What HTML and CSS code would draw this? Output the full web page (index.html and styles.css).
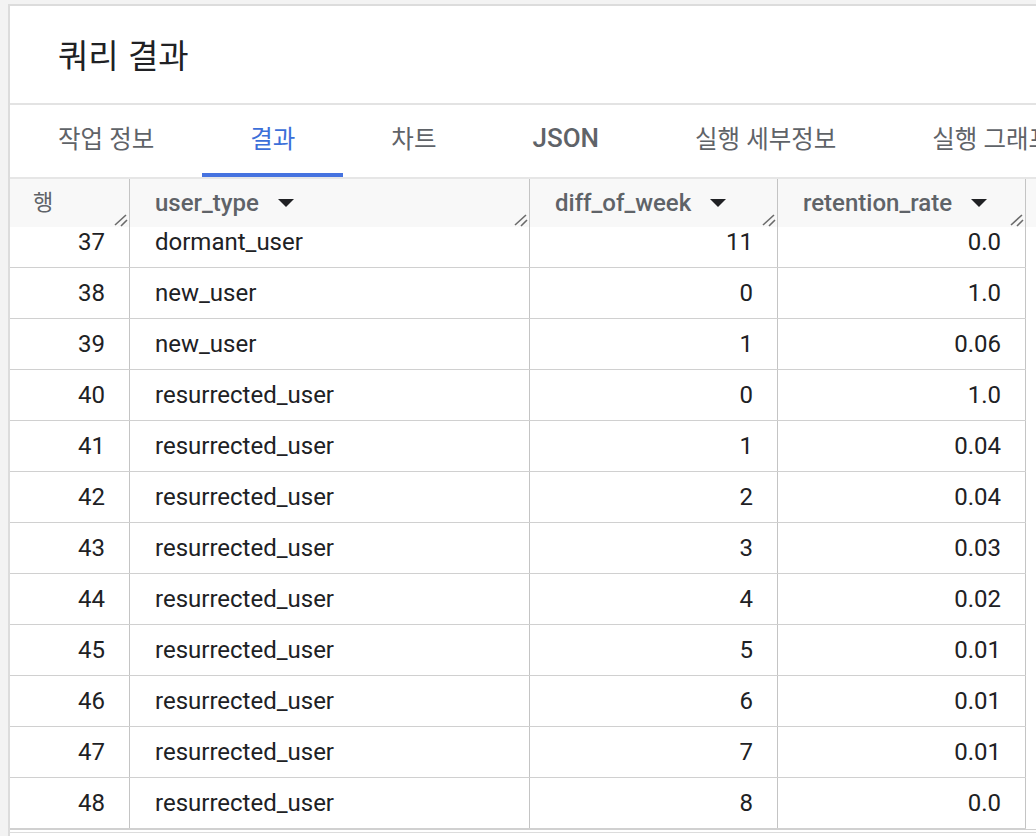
FILE: index.html
```html
<!DOCTYPE html>
<html lang="ko">
<head>
<meta charset="utf-8">
<title>쿼리 결과</title>
<link rel="stylesheet" href="styles.css">
</head>
<body>
<div class="page">
  <div class="panel">
    <div class="title">쿼리 결과</div>
    <div class="tabs">
      <div class="tab">작업 정보</div>
      <div class="tab active">결과</div>
      <div class="tab">차트</div>
      <div class="tab latin">JSON</div>
      <div class="tab">실행 세부정보</div>
      <div class="tab">실행 그래프</div>
    </div>
    <div class="table">
      <div class="thead">
        <div class="th th-num">행<svg class="grip" width="14" height="14" viewBox="0 0 14 14"><path d="M1 12 L12 2 M7 13 L13 7" stroke="#6b6b6b" stroke-width="1.6" fill="none"/></svg></div>
        <div class="th">user_type<svg class="sort" width="16" height="8" viewBox="0 0 16 8"><path d="M0 0 H16 L8 8 Z" fill="#202124"/></svg><svg class="grip" width="14" height="14" viewBox="0 0 14 14"><path d="M1 12 L12 2 M7 13 L13 7" stroke="#6b6b6b" stroke-width="1.6" fill="none"/></svg></div>
        <div class="th">diff_of_week<svg class="sort" width="16" height="8" viewBox="0 0 16 8"><path d="M0 0 H16 L8 8 Z" fill="#202124"/></svg><svg class="grip" width="14" height="14" viewBox="0 0 14 14"><path d="M1 12 L12 2 M7 13 L13 7" stroke="#6b6b6b" stroke-width="1.6" fill="none"/></svg></div>
        <div class="th">retention_rate<svg class="sort" width="16" height="8" viewBox="0 0 16 8"><path d="M0 0 H16 L8 8 Z" fill="#202124"/></svg><svg class="grip" width="14" height="14" viewBox="0 0 14 14"><path d="M1 12 L12 2 M7 13 L13 7" stroke="#6b6b6b" stroke-width="1.6" fill="none"/></svg></div>
        <div class="th th-rest"></div>
      </div>
      <div class="tbody">
        <div class="row"><div class="td num">37</div><div class="td">dormant_user</div><div class="td num">11</div><div class="td num">0.0</div></div>
        <div class="row"><div class="td num">38</div><div class="td">new_user</div><div class="td num">0</div><div class="td num">1.0</div></div>
        <div class="row"><div class="td num">39</div><div class="td">new_user</div><div class="td num">1</div><div class="td num">0.06</div></div>
        <div class="row"><div class="td num">40</div><div class="td">resurrected_user</div><div class="td num">0</div><div class="td num">1.0</div></div>
        <div class="row"><div class="td num">41</div><div class="td">resurrected_user</div><div class="td num">1</div><div class="td num">0.04</div></div>
        <div class="row"><div class="td num">42</div><div class="td">resurrected_user</div><div class="td num">2</div><div class="td num">0.04</div></div>
        <div class="row"><div class="td num">43</div><div class="td">resurrected_user</div><div class="td num">3</div><div class="td num">0.03</div></div>
        <div class="row"><div class="td num">44</div><div class="td">resurrected_user</div><div class="td num">4</div><div class="td num">0.02</div></div>
        <div class="row"><div class="td num">45</div><div class="td">resurrected_user</div><div class="td num">5</div><div class="td num">0.01</div></div>
        <div class="row"><div class="td num">46</div><div class="td">resurrected_user</div><div class="td num">6</div><div class="td num">0.01</div></div>
        <div class="row"><div class="td num">47</div><div class="td">resurrected_user</div><div class="td num">7</div><div class="td num">0.01</div></div>
        <div class="row"><div class="td num">48</div><div class="td">resurrected_user</div><div class="td num">8</div><div class="td num">0.0</div></div>
      </div>
      <div class="tfoot"></div>
    </div>
  </div>
</div>
</body>
</html>
```
FILE: styles.css
```css
html, body {
  margin: 0;
  padding: 0;
}
body {
  background: #f3f3f3;
  font-family: Roboto, "Noto Sans CJK KR", sans-serif;
  color: #202124;
  overflow: hidden;
}
.page {
  padding: 4px 0 0 8px;
  height: 832px;
}
.panel {
  background: #fff;
  border-top: 2px solid #dcdcdc;
  border-left: 2px solid #dcdcdc;
  height: 830px;
  overflow: hidden;
  display: flex;
  flex-direction: column;
}
.title {
  height: 95px;
  flex: none;
  display: flex;
  align-items: center;
  padding-left: 48px;
  padding-bottom: 2px;
  font-family: "Noto Sans CJK KR", sans-serif;
  font-size: 33px;
  color: #202124;
  border-bottom: 2px solid #e3e3e3;
}
.tabs {
  flex: none;
  display: flex;
  height: 72px;
  border-bottom: 2px solid #e6e6e6;
  white-space: nowrap;
}
.tab {
  flex: none;
  display: flex;
  align-items: center;
  padding: 0 48px 3px;
  font-family: Roboto, "Noto Sans CJK KR", sans-serif;
  font-size: 24.5px;
  color: #5f6368;
  border-bottom: 4px solid transparent;
}
.tab.latin {
  font-weight: 500;
  font-size: 26px;
}
.tab.active {
  color: #3c6fd9;
  border-bottom-color: #4673e0;
}
.table {
  flex: none;
  display: flex;
  flex-direction: column;
}
.thead {
  display: grid;
  grid-template-columns: 120px 400px 248px 248px 1fr;
  height: 48px;
  background: #f8f8f8;
  position: relative;
  z-index: 1;
}
.th {
  position: relative;
  display: flex;
  align-items: center;
  padding-left: 25px;
  font-size: 24px;
  font-weight: 500;
  color: #5f6368;
  border-right: 1px solid #c4c4c4;
  white-space: nowrap;
}
.th-num {
  padding-left: 23px;
  align-items: flex-start;
  padding-top: 5px;
  font-family: "Noto Sans CJK KR", sans-serif;
  font-weight: 400;
  font-size: 22px;
}
.th-rest {
  border-right: none;
}
.sort {
  margin-left: 19px;
  flex: none;
}
.grip {
  position: absolute;
  right: 1px;
  bottom: 0;
}
.tbody {
  height: 602px;
  overflow: hidden;
  border-bottom: 1px solid #d0d0d0;
}
.row {
  display: grid;
  grid-template-columns: 120px 400px 248px 248px;
  width: 1016px;
  height: 50px;
  border-bottom: 1px solid #d0d0d0;
}
.row:first-child {
  margin-top: -10px;
}
.td {
  display: flex;
  align-items: center;
  padding-left: 25px;
  font-size: 24px;
  color: #202124;
  border-right: 1px solid #c4c4c4;
  white-space: nowrap;
}
.td.num {
  justify-content: flex-end;
  padding-left: 0;
  padding-right: 24px;
}
.tfoot {
  height: 2px;
  border-bottom: 1px solid #dcdcdc;
}
```
